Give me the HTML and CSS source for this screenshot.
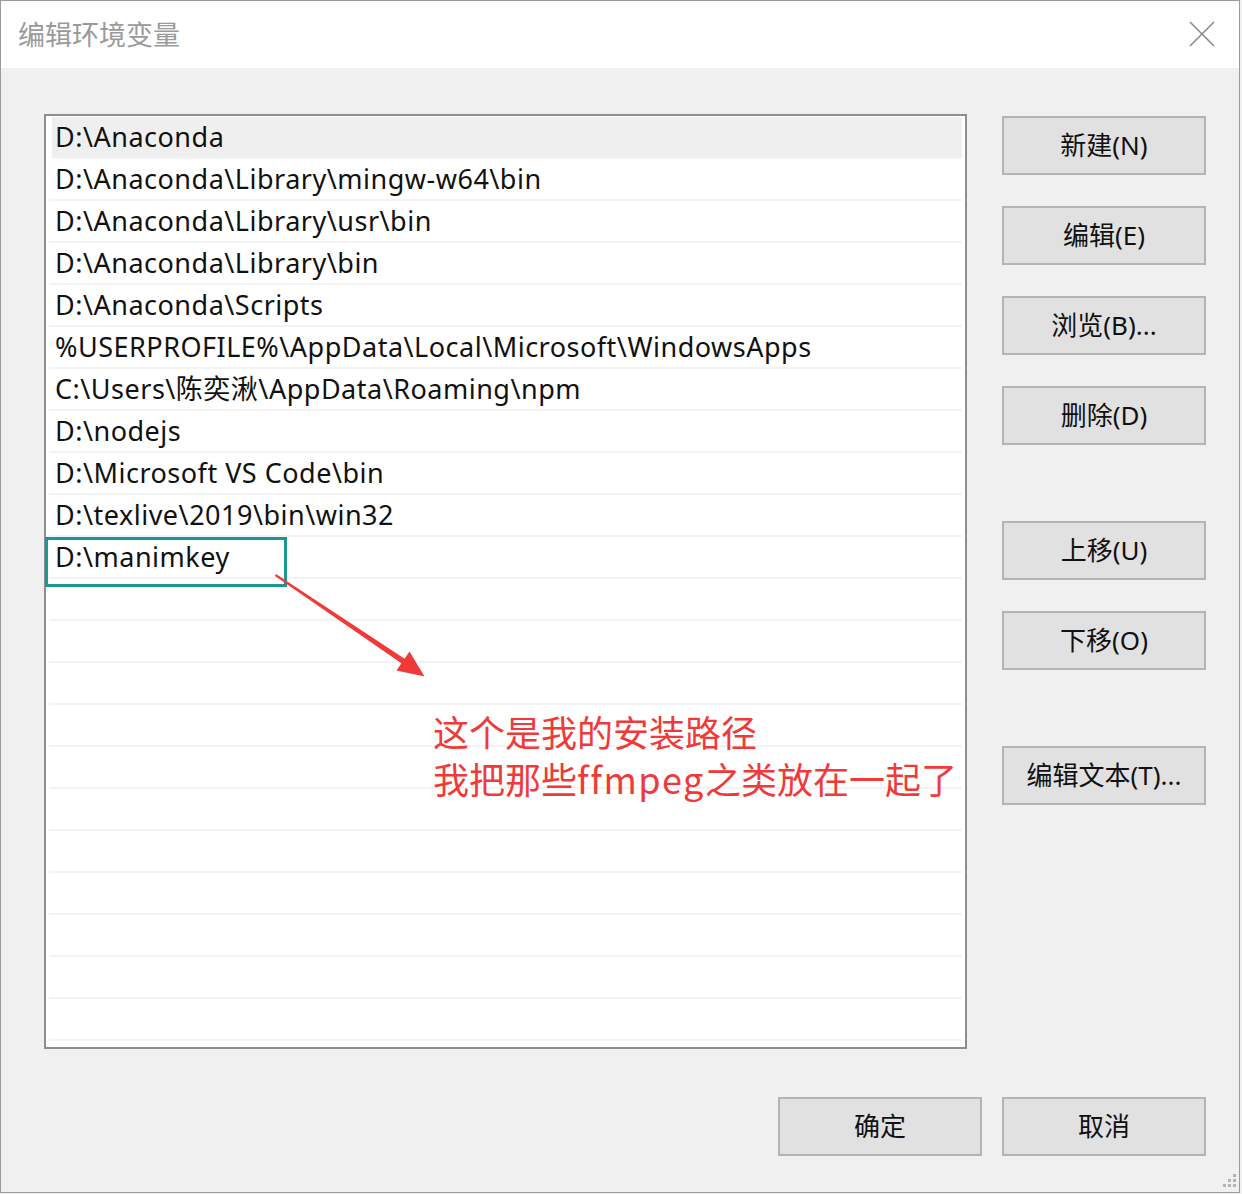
FILE: index.html
```html
<!DOCTYPE html>
<html lang="zh-CN">
<head>
<meta charset="utf-8">
<title>编辑环境变量</title>
<link rel="stylesheet" href="styles.css">
</head>
<body>
<div class="window">
  <div class="titlebar">
    <span class="title">编辑环境变量</span>
    <svg class="close" width="26" height="26" viewBox="0 0 26 26"><path d="M1 1 L25 25 M25 1 L1 25" stroke="#8a8a8a" stroke-width="1.6" fill="none"/></svg>
  </div>
  <div class="content">
    <div class="main">
      <div class="list">
        <div class="row selected">D:\Anaconda</div>
        <div class="row">D:\Anaconda\Library\mingw-w64\bin</div>
        <div class="row">D:\Anaconda\Library\usr\bin</div>
        <div class="row">D:\Anaconda\Library\bin</div>
        <div class="row">D:\Anaconda\Scripts</div>
        <div class="row">%USERPROFILE%\AppData\Local\Microsoft\WindowsApps</div>
        <div class="row">C:\Users\陈奕湫\AppData\Roaming\npm</div>
        <div class="row">D:\nodejs</div>
        <div class="row">D:\Microsoft VS Code\bin</div>
        <div class="row">D:\texlive\2019\bin\win32</div>
        <div class="row">D:\manimkey</div>
        <div class="row"></div>
        <div class="row"></div>
        <div class="row"></div>
        <div class="row"></div>
        <div class="row"></div>
        <div class="row"></div>
        <div class="row"></div>
        <div class="row"></div>
        <div class="row"></div>
        <div class="row"></div>
        <div class="row"></div>
        <div class="mark-box"></div>
        <div class="note">这个是我的安装路径<br>我把那些<span class="latin">ffmpeg</span>之类放在一起了</div>
      </div>
      <div class="side">
        <div class="btn">新建(N)</div>
        <div class="btn">编辑(E)</div>
        <div class="btn">浏览(B)...</div>
        <div class="btn">删除(D)</div>
        <div class="btn gap">上移(U)</div>
        <div class="btn">下移(O)</div>
        <div class="btn gap">编辑文本(T)...</div>
      </div>
    </div>
    <div class="footer">
      <div class="btn">确定</div>
      <div class="btn">取消</div>
    </div>
  </div>
  <svg class="arrow" width="1242" height="1194" viewBox="0 0 1242 1194">
    <polygon points="276,574 404.6,658.7 409.5,651.5 424.5,676.5 396.5,670.5 401.4,663.3 275,576" fill="#f03a3a"/>
  </svg>
  <svg class="grip" width="18" height="18" viewBox="0 0 18 18">
    <g fill="#b3b3b3">
      <rect x="14" y="1" width="3" height="3"/>
      <rect x="9" y="6" width="3" height="3"/><rect x="14" y="6" width="3" height="3"/>
      <rect x="4" y="11" width="3" height="3"/><rect x="9" y="11" width="3" height="3"/><rect x="14" y="11" width="3" height="3"/>
    </g>
  </svg>
</div>
</body>
</html>
```

FILE: styles.css
```css
html, body {
  margin: 0;
  padding: 0;
  background: #f0f0f0;
}
body {
  width: 1242px;
  height: 1194px;
  overflow: hidden;
  font-family: "Noto Sans", "Noto Sans CJK SC", sans-serif;
}
.window {
  position: relative;
  box-sizing: border-box;
  width: 1240px;
  height: 1193px;
  border: 1px solid #9a9a9a;
  display: flex;
  flex-direction: column;
  background: #f0f0f0;
}
.titlebar {
  height: 67px;
  background: #ffffff;
  display: flex;
  align-items: center;
  justify-content: space-between;
  padding: 0 24px 0 17px;
  flex: none;
}
.title {
  font-family: "Noto Sans CJK SC", sans-serif;
  font-size: 27px;
  color: #9a9a9a;
  margin-top: -3px;
}
.close {
  margin-top: -2px;
}
.content {
  flex: 1;
  padding: 46px 33px 0 43px;
  display: flex;
  flex-direction: column;
}
.main {
  display: flex;
  align-items: flex-start;
}
.list {
  position: relative;
  box-sizing: border-box;
  width: 925px;
  height: 935px;
  border: 2px solid #8e8e8e;
  background: #ffffff;
  padding: 1px 3px 0 3px;
}
.row {
  box-sizing: border-box;
  height: 42px;
  border-bottom: 2px solid #f3f3f3;
  padding-left: 6px;
  font-size: 27px;
  letter-spacing: 0.5px;
  line-height: 40px;
  color: #111;
  white-space: nowrap;
}
.row.selected {
  background: #efefef;
  margin-left: 3px;
  padding-left: 3px;
}
.mark-box {
  position: absolute;
  left: -1px;
  top: 421px;
  width: 242px;
  height: 50px;
  box-sizing: border-box;
  border: 3px solid #1b9892;
}
.note {
  position: absolute;
  left: 387px;
  top: 592px;
  font-family: "Noto Sans CJK SC", sans-serif;
  font-size: 36px;
  line-height: 47px;
  color: #f03a3a;
  white-space: nowrap;
}
.note .latin {
  letter-spacing: 1.5px;
}
.side {
  margin-left: 35px;
  margin-top: 2px;
  display: flex;
  flex-direction: column;
  gap: 31px;
}
.side .gap {
  margin-top: 45px;
}
.btn {
  box-sizing: border-box;
  width: 204px;
  height: 59px;
  background: #e1e1e1;
  border: 2px solid #b4b4b4;
  display: flex;
  align-items: center;
  justify-content: center;
  padding-bottom: 4px;
  font-family: "Noto Sans", "Noto Sans CJK SC", sans-serif;
  font-size: 26px;
  color: #111;
}
.footer {
  margin-top: 48px;
  display: flex;
  justify-content: flex-end;
  gap: 20px;
}
.arrow {
  position: absolute;
  left: -1px;
  top: -1px;
  pointer-events: none;
}
.grip {
  position: absolute;
  right: 2px;
  bottom: 1px;
}
```
